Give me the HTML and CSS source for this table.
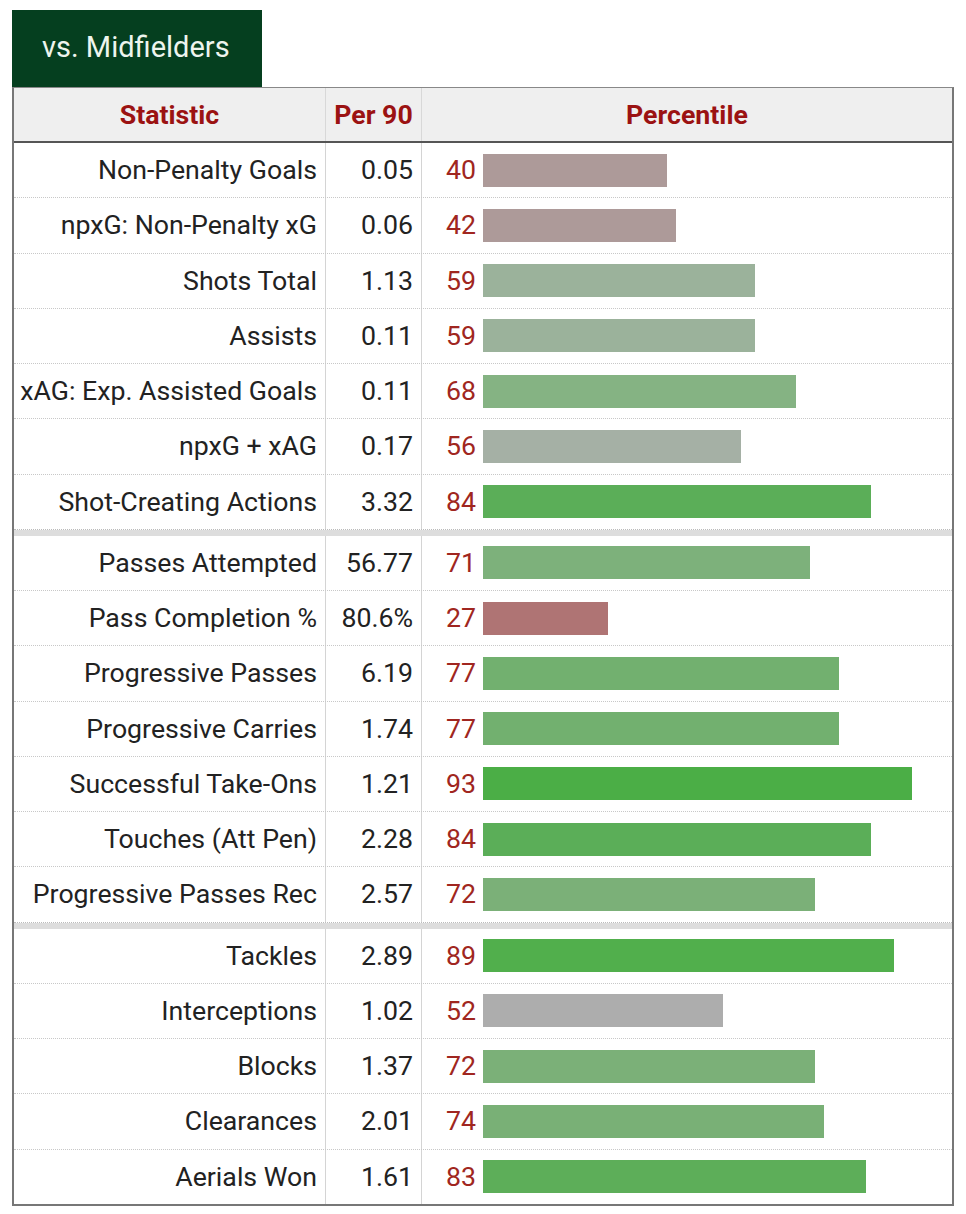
FILE: index.html
```html
<!DOCTYPE html>
<html lang="en">
<head>
<meta charset="utf-8">
<title>vs. Midfielders</title>
<link rel="stylesheet" href="styles.css">
</head>
<body>
<div class="page">
  <div class="tab">vs. Midfielders</div>
  <div class="table">
    <div class="row head">
      <div class="c-stat">Statistic</div>
      <div class="c-per">Per 90</div>
      <div class="c-pct">Percentile</div>
    </div>

    <div class="row"><div class="c-stat">Non-Penalty Goals</div><div class="c-per">0.05</div><div class="c-pct"><span class="num">40</span><span class="bar" style="width:184px;background:#ad9a99"></span></div></div>
    <div class="row"><div class="c-stat">npxG: Non-Penalty xG</div><div class="c-per">0.06</div><div class="c-pct"><span class="num">42</span><span class="bar" style="width:193px;background:#ad9a99"></span></div></div>
    <div class="row"><div class="c-stat">Shots Total</div><div class="c-per">1.13</div><div class="c-pct"><span class="num">59</span><span class="bar" style="width:272px;background:#9bb29b"></span></div></div>
    <div class="row"><div class="c-stat">Assists</div><div class="c-per">0.11</div><div class="c-pct"><span class="num">59</span><span class="bar" style="width:272px;background:#9bb29b"></span></div></div>
    <div class="row"><div class="c-stat">xAG: Exp. Assisted Goals</div><div class="c-per">0.11</div><div class="c-pct"><span class="num">68</span><span class="bar" style="width:313px;background:#85b383"></span></div></div>
    <div class="row"><div class="c-stat">npxG + xAG</div><div class="c-per">0.17</div><div class="c-pct"><span class="num">56</span><span class="bar" style="width:258px;background:#a5b0a5"></span></div></div>
    <div class="row last"><div class="c-stat">Shot-Creating Actions</div><div class="c-per">3.32</div><div class="c-pct"><span class="num">84</span><span class="bar" style="width:388px;background:#5bae58"></span></div></div>

    <div class="row first"><div class="c-stat">Passes Attempted</div><div class="c-per">56.77</div><div class="c-pct"><span class="num">71</span><span class="bar" style="width:327px;background:#7db17b"></span></div></div>
    <div class="row"><div class="c-stat">Pass Completion %</div><div class="c-per">80.6%</div><div class="c-pct"><span class="num">27</span><span class="bar" style="width:125px;background:#af7474"></span></div></div>
    <div class="row"><div class="c-stat">Progressive Passes</div><div class="c-per">6.19</div><div class="c-pct"><span class="num">77</span><span class="bar" style="width:356px;background:#72b06f"></span></div></div>
    <div class="row"><div class="c-stat">Progressive Carries</div><div class="c-per">1.74</div><div class="c-pct"><span class="num">77</span><span class="bar" style="width:356px;background:#72b06f"></span></div></div>
    <div class="row"><div class="c-stat">Successful Take-Ons</div><div class="c-per">1.21</div><div class="c-pct"><span class="num">93</span><span class="bar" style="width:429px;background:#4bae46"></span></div></div>
    <div class="row"><div class="c-stat">Touches (Att Pen)</div><div class="c-per">2.28</div><div class="c-pct"><span class="num">84</span><span class="bar" style="width:388px;background:#5bae58"></span></div></div>
    <div class="row last"><div class="c-stat">Progressive Passes Rec</div><div class="c-per">2.57</div><div class="c-pct"><span class="num">72</span><span class="bar" style="width:332px;background:#7bb078"></span></div></div>

    <div class="row first"><div class="c-stat">Tackles</div><div class="c-per">2.89</div><div class="c-pct"><span class="num">89</span><span class="bar" style="width:411px;background:#51af4c"></span></div></div>
    <div class="row"><div class="c-stat">Interceptions</div><div class="c-per">1.02</div><div class="c-pct"><span class="num">52</span><span class="bar" style="width:240px;background:#adadad"></span></div></div>
    <div class="row"><div class="c-stat">Blocks</div><div class="c-per">1.37</div><div class="c-pct"><span class="num">72</span><span class="bar" style="width:332px;background:#7bb078"></span></div></div>
    <div class="row"><div class="c-stat">Clearances</div><div class="c-per">2.01</div><div class="c-pct"><span class="num">74</span><span class="bar" style="width:341px;background:#79b076"></span></div></div>
    <div class="row end"><div class="c-stat">Aerials Won</div><div class="c-per">1.61</div><div class="c-pct"><span class="num">83</span><span class="bar" style="width:383px;background:#5dae59"></span></div></div>
  </div>
</div>
</body>
</html>
```
FILE: styles.css
```css
* { box-sizing: border-box; }
html, body { margin: 0; padding: 0; background: #fff; }
body {
  font-family: Roboto, "Liberation Sans", Arial, sans-serif;
  color: #222;
}
.page {
  padding: 10px 0 0 12px;
  width: 966px;
}
.tab {
  width: 250px;
  height: 77px;
  background: #053f1f;
  color: #eef5ee;
  font-size: 29px;
  display: flex;
  align-items: center;
  padding-left: 30px;
  padding-bottom: 4px;
}
.table {
  width: 942px;
  border: 2px solid #777;
  border-top: 1px solid #888;
}
.row {
  display: grid;
  grid-template-columns: 312px 96px 1fr;
  height: 55.25px;
  border-bottom: 1px dotted #c8c8c8;
  font-size: 26.7px;
}
.row > div {
  display: flex;
  align-items: center;
}
.c-stat {
  justify-content: flex-end;
  padding-right: 8px;
  border-right: 1px solid #d4d4d4;
}
.c-per {
  justify-content: flex-end;
  padding-right: 8px;
  border-right: 1px solid #d4d4d4;
}
.c-pct {
  padding-right: 10px;
}
.row.head {
  height: 55px;
  background: #efefef;
  border-bottom: 2px solid #555;
  color: #9b1212;
  font-weight: bold;
}
.row.head > div { justify-content: center; padding-right: 0; }
.row.head .c-stat, .row.head .c-per { border-right: 1px solid #d8d8d8; }
.row.first {
  border-top: 6px solid #dddddd;
  height: 61.25px;
}
.row.last { border-bottom: 1px dotted #bbb; }
.row.end { border-bottom: none; height: 54.5px; }
.num {
  width: 54px;
  text-align: right;
  color: #a02620;
  flex: none;
}
.bar {
  display: block;
  height: 33px;
  margin-left: 7px;
  flex: none;
}
```
